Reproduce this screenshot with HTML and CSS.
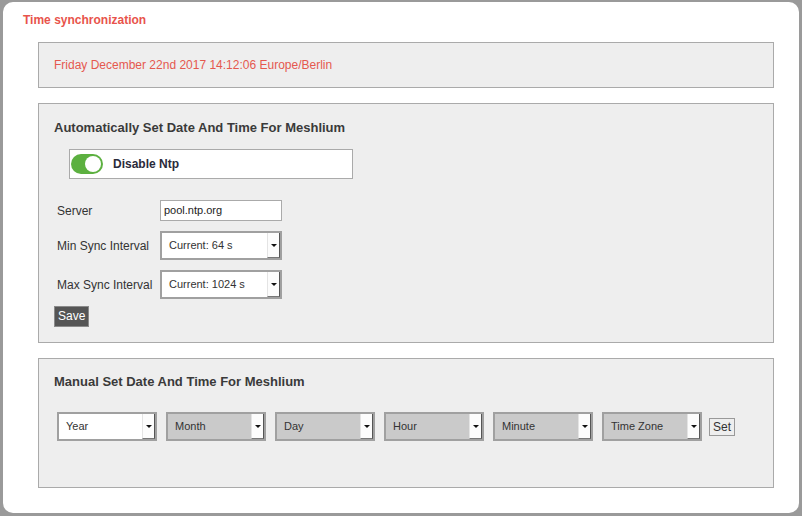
FILE: index.html
```html
<!DOCTYPE html>
<html>
<head>
<meta charset="utf-8">
<link rel="stylesheet" href="styles.css">
</head>
<body>
<div class="frame">
  <h1 class="title">Time synchronization</h1>
  <div class="panel now">Friday December 22nd 2017 14:12:06 Europe/Berlin</div>
  <div class="panel auto">
    <h2 class="heading">Automatically Set Date And Time For Meshlium</h2>
    <div class="ntp-box">
      <span class="toggle"><span class="knob"></span></span>
      <span class="ntp-label">Disable Ntp</span>
    </div>
    <div class="form">
      <div class="row row-server">
        <span class="label">Server</span>
        <div class="input">pool.ntp.org</div>
      </div>
      <div class="row row-sel">
        <span class="label">Min Sync Interval</span>
        <div class="select white wide"><span class="val">Current: 64 s</span><span class="arrow"></span></div>
      </div>
      <div class="row row-sel">
        <span class="label">Max Sync Interval</span>
        <div class="select white wide"><span class="val">Current: 1024 s</span><span class="arrow"></span></div>
      </div>
    </div>
    <button class="save">Save</button>
  </div>
  <div class="panel manual">
    <h2 class="heading">Manual Set Date And Time For Meshlium</h2>
    <div class="selects">
      <div class="select white"><span class="val">Year</span><span class="arrow"></span></div>
      <div class="select"><span class="val">Month</span><span class="arrow"></span></div>
      <div class="select"><span class="val">Day</span><span class="arrow"></span></div>
      <div class="select"><span class="val">Hour</span><span class="arrow"></span></div>
      <div class="select"><span class="val">Minute</span><span class="arrow"></span></div>
      <div class="select"><span class="val">Time Zone</span><span class="arrow"></span></div>
      <button class="set">Set</button>
    </div>
  </div>
</div>
</body>
</html>
```

FILE: styles.css
```css
html, body {
  margin: 0;
  padding: 0;
  background: #9a9a9a;
  font-family: "Liberation Sans", Arial, sans-serif;
  color: #333;
}
.frame {
  margin: 2px 3px 3px 3px;
  height: 511px;
  box-sizing: border-box;
  background: #fff;
  border-radius: 10px;
  padding: 0 25px 0 35px;
  overflow: hidden;
}
.title {
  margin: 0 0 0 -15px;
  padding-top: 11px;
  font-size: 12px;
  line-height: 15px;
  font-weight: bold;
  color: #e8534b;
  height: 29px;
  box-sizing: border-box;
  height: 40px;
}
.panel {
  background: #eeeeee;
  border: 1px solid #aaaaaa;
  box-sizing: border-box;
}
.now {
  height: 46px;
  padding-top: 1px;
  line-height: 43px;
  padding-left: 15px;
  font-size: 12px;
  color: #e5584e;
  margin-bottom: 15px;
}
.auto {
  padding: 16px 0 15px 15px;
  margin-bottom: 15px;
}
.heading {
  margin: 0;
  font-size: 13px;
  line-height: 16px;
  font-weight: bold;
  color: #3a3a3a;
}
.ntp-box {
  margin: 13px 0 0 15px;
  width: 284px;
  height: 30px;
  box-sizing: border-box;
  background: #fff;
  border: 1px solid #aaaaaa;
  display: flex;
  align-items: center;
  padding-left: 1px;
}
.toggle {
  width: 32px;
  height: 20px;
  border-radius: 10px;
  background: #5cb040;
  display: flex;
  align-items: center;
  justify-content: flex-end;
  padding-right: 2px;
  box-sizing: border-box;
}
.knob {
  width: 16px;
  height: 16px;
  border-radius: 50%;
  background: #fff;
}
.ntp-label {
  margin-left: 10px;
  font-size: 12px;
  font-weight: bold;
  color: #2a2a3a;
}
.form {
  margin: 21px 0 0 3px;
  display: flex;
  flex-direction: column;
  gap: 10px;
}
.row {
  display: flex;
  align-items: center;
}
.label {
  width: 103px;
  font-size: 12px;
  color: #333;
}
.input {
  width: 122px;
  height: 21px;
  box-sizing: border-box;
  background: #fff;
  border: 1px solid #aaaaaa;
  font-size: 11px;
  line-height: 19px;
  padding-left: 3px;
  color: #222;
}
.select {
  width: 100px;
  height: 29px;
  box-sizing: border-box;
  border: 2px solid #a0a0a0;
  background: #cacaca;
  display: flex;
  align-items: stretch;
  font-size: 11px;
  color: #333;
}
.select.white {
  background: #fff;
}
.select.wide {
  width: 122px;
}
.val {
  flex: 1;
  padding-left: 7px;
  line-height: 25px;
  white-space: nowrap;
}
.arrow {
  width: 13px;
  box-sizing: border-box;
  background: #fcfcfc;
  border-left: 1px solid #e4e4e4;
  border-right: 1px solid #555;
  border-bottom: 1px solid #777;
  position: relative;
}
.arrow::after {
  content: "";
  position: absolute;
  left: 3px;
  top: 11px;
  border-left: 3px solid transparent;
  border-right: 3px solid transparent;
  border-top: 3px solid #111;
}
.save {
  margin-top: 7px;
  height: 21px;
  padding: 0 3px;
  background: #555;
  border: 1px solid #8a8a8a;
  color: #fff;
  font-family: "Liberation Sans", Arial, sans-serif;
  font-size: 12px;
  line-height: 19px;
  border-radius: 0;
}
.manual {
  padding: 15px 0 0 15px;
  height: 130px;
}
.selects {
  margin: 22px 0 0 3px;
  display: flex;
  align-items: center;
  gap: 9px;
}
.set {
  margin-left: -2px;
  height: 18px;
  padding: 0 3px;
  background: #eee;
  border: 1px solid #999;
  color: #333;
  font-family: "Liberation Sans", Arial, sans-serif;
  font-size: 12px;
  line-height: 16px;
  border-radius: 0;
}
```
